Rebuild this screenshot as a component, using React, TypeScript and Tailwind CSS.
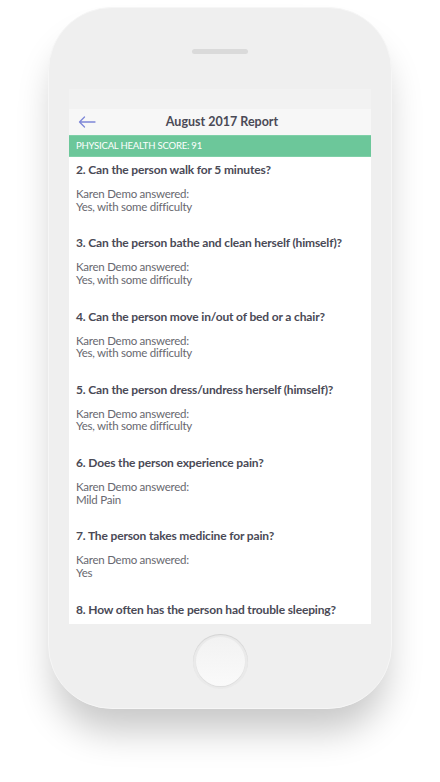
import React from "react";

const items = [
  { q: "2. Can the person walk for 5 minutes?", a: "Yes, with some difficulty" },
  { q: "3. Can the person bathe and clean herself (himself)?", a: "Yes, with some difficulty" },
  { q: "4. Can the person move in/out of bed or a chair?", a: "Yes, with some difficulty" },
  { q: "5. Can the person dress/undress herself (himself)?", a: "Yes, with some difficulty" },
  { q: "6. Does the person experience pain?", a: "Mild Pain" },
  { q: "7. The person takes medicine for pain?", a: "Yes" },
  { q: "8. How often has the person had trouble sleeping?", a: "" },
];

export default function App() {
  return (
    <div
      className="w-[440px] h-[782px] bg-white flex justify-center overflow-hidden"
      style={{ fontFamily: "Lato, 'Noto Sans', sans-serif" }}
    >
      <div className="mt-[7px] w-[344px] h-[702px] shrink-0 rounded-[64px] bg-[#efefef] shadow-[0_28px_36px_-6px_rgba(0,0,0,0.22)] border border-[#f6f6f6] flex flex-col items-center">
        <div className="mt-[41px] w-[56px] h-[5px] shrink-0 rounded-full bg-[#dadada]" />
        <div className="mt-[35px] w-[302px] h-[535px] shrink-0 bg-white flex flex-col overflow-hidden">
          <div className="h-[20px] shrink-0 bg-[#f2f2f2]" />
          <div className="h-[26px] shrink-0 bg-[#f7f7f7] relative flex items-center justify-center">
            <svg
              className="absolute left-[9px] top-[7px]"
              width="18"
              height="12"
              viewBox="0 0 18 12"
              fill="none"
              stroke="#7e87d8"
              strokeWidth="1.3"
              strokeLinecap="round"
              strokeLinejoin="round"
            >
              <path d="M17 6H1.5M6.5 1L1.5 6l5 5" />
            </svg>
            <span className="ml-[4px] text-[12.5px] font-bold text-[#4a4a56]">August 2017 Report</span>
          </div>
          <div className="h-[22px] shrink-0 bg-[#6cc79a] border-y border-[#7fd0a8] flex items-center px-[7px]">
            <span className="text-[9.5px] text-white tracking-[-0.2px]">PHYSICAL HEALTH SCORE: 91</span>
          </div>
          <div className="px-[7px] pt-[4px] flex flex-col shrink-0">
            {items.map((it, i) => (
              <div key={i} className="flex flex-col shrink-0 pb-[21.3px]">
                <div className="text-[12px] tracking-[-0.15px] leading-[18px] font-bold text-[#4a4a56] whitespace-nowrap">
                  {it.q}
                </div>
                {it.a && (
                  <div className="mt-[9px] text-[11.5px] tracking-[-0.25px] leading-[12.5px] text-[#68686f]">
                    <div>Karen Demo answered:</div>
                    <div>{it.a}</div>
                  </div>
                )}
              </div>
            ))}
          </div>
        </div>
        <div className="mt-[10px] w-[55px] h-[55px] shrink-0 rounded-full bg-[#eaeaea] p-[3px] shadow-[inset_0_1px_1px_rgba(0,0,0,0.1)]">
          <div className="w-full h-full rounded-full bg-gradient-to-b from-[#f2f2f2] to-[#fafafa] shadow-[0_1px_1px_rgba(0,0,0,0.06)]" />
        </div>
      </div>
    </div>
  );
}
